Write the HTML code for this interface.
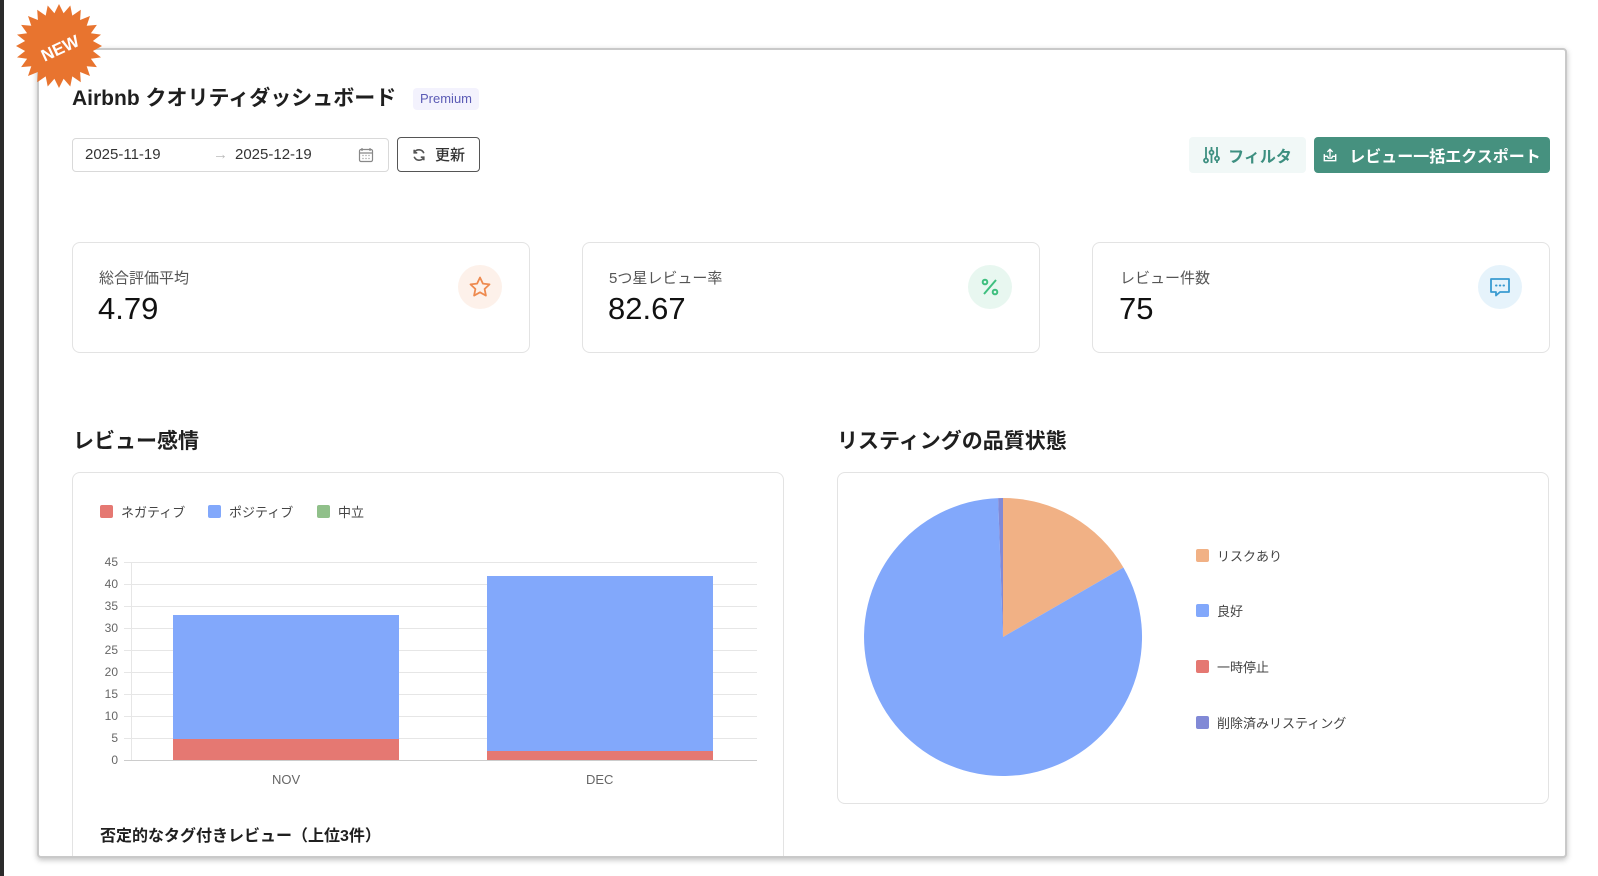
<!DOCTYPE html>
<html><head><meta charset="utf-8"><style>
*{box-sizing:border-box;margin:0;padding:0}
body{width:1598px;height:876px;overflow:hidden;background:#fff;font-family:"Liberation Sans","Noto Sans CJK JP",sans-serif;color:#1f1f1f;position:relative}
.a{position:absolute}
.strip{left:0;top:0;width:4px;height:876px;background:#2b2b2b}
.panel{left:37px;top:48px;width:1530px;height:810px;border:2px solid #c9c9c9;border-radius:4px;background:#fff;box-shadow:0 2px 6px rgba(0,0,0,.25)}
.card{border:1px solid #e3e3e3;border-radius:8px;background:#fff}
.lbl{font-size:15px;color:#555}
.num{font-size:31px;font-weight:500;color:#111}
.ic{width:44px;height:44px;border-radius:50%;display:flex;align-items:center;justify-content:center}
.yl{font-size:12px;color:#666;width:20px;text-align:right}
.grid{height:1px;background:#e6e6e6}
.leg{font-size:13px;color:#444;display:flex;align-items:center}
.sw{width:13px;height:13px;border-radius:2px;display:inline-block;margin-right:8px}
</style></head><body>
<div class="a strip"></div>
<div class="a panel"></div>

<svg class="a" style="left:14px;top:2px" width="90" height="90" viewBox="0 0 90 90">
<polygon fill="#e8742f" points="45,2 49.6,11.2 56.3,3.5 58.3,13.6 66.8,7.8 66.1,18 76,14 72.7,23.8 82.9,22.9 76.9,31.2 87,32.6 78.9,39 88,44 78.9,49 87,55.4 76.9,56.8 82.9,65.1 72.7,64.2 76,74 66.1,70 66.8,80.2 58.3,74.4 56.3,84.5 49.6,76.8 45,86 40.4,76.8 33.7,84.5 31.7,74.4 23.2,80.2 23.9,70 14,74 17.3,64.2 7.1,65.1 13.1,56.8 3,55.4 11.1,49 2,44 11.1,39 3,32.6 13.1,31.2 7.1,22.9 17.3,23.8 14,14 23.9,18 23.2,7.8 31.7,13.6 33.7,3.5 40.4,11.2"/>
<text x="46" y="52" fill="#fff" font-size="17" font-weight="bold" font-family="Liberation Sans" text-anchor="middle" transform="rotate(-25 46 46)">NEW</text>
</svg>

<div class="a" style="left:72px;top:82px;font-size:21px;font-weight:bold">Airbnb クオリティダッシュボード</div>
<div class="a" style="left:413px;top:88px;height:22px;padding:0 7px;background:#f3f2fd;border-radius:4px;color:#5b5bb5;font-size:13px;line-height:22px">Premium</div>

<div class="a" style="left:72px;top:138px;width:317px;height:34px;border:1px solid #d9d9d9;border-radius:4px;font-size:15px;color:#333">
<span class="a" style="left:12px;top:7px">2025-11-19</span>
<span class="a" style="left:140px;top:7px;color:#bbb">→</span>
<span class="a" style="left:162px;top:7px">2025-12-19</span>
<svg class="a" style="left:285px;top:8px" width="16" height="16" viewBox="0 0 16 16" fill="none" stroke="#888" stroke-width="1.2"><rect x="1.5" y="2.5" width="13" height="12" rx="1.5"/><path d="M4 1v3M12 1v3M1.5 6h13"/><path d="M4.5 8.5h1M7.5 8.5h1M10.5 8.5h1M4.5 11.5h1M7.5 11.5h1M10.5 11.5h1"/></svg>
</div>
<div class="a" style="left:397px;top:137px;width:83px;height:35px;border:1px solid #555;border-radius:4px;font-size:15px;font-weight:500;color:#333;display:flex;align-items:center;justify-content:center;gap:9px">
<svg width="14" height="14" viewBox="0 0 16 16" fill="none" stroke="#555" stroke-width="1.8"><path d="M13.5 6A6 6 0 0 0 2.7 5M2.5 10a6 6 0 0 0 10.8 1"/><path d="M2.5 2v3.5H6M13.5 14v-3.5H10"/></svg>更新</div>

<div class="a" style="left:1189px;top:137px;width:117px;height:36px;background:#f1f8f7;border-radius:4px;color:#3d8f80;font-size:16px;font-weight:bold;display:flex;align-items:center;justify-content:center;gap:8px">
<svg width="17" height="18" viewBox="0 0 17 18" fill="none" stroke="#3d8f80" stroke-width="1.8"><path d="M3 1v11M8.5 1v3M8.5 9v8M14 1v9M14 15v2"/><circle cx="3" cy="14.5" r="2"/><circle cx="8.5" cy="6.5" r="2"/><circle cx="14" cy="12.5" r="2"/></svg>フィルタ</div>
<div class="a" style="left:1314px;top:137px;width:236px;height:36px;background:#46917f;border-radius:4px;color:#fff;font-size:16px;font-weight:bold;display:flex;align-items:center;justify-content:center;gap:12px">
<svg width="14" height="14" viewBox="0 0 16 16" fill="none" stroke="#fff" stroke-width="1.6"><path d="M1.5 7v7.5h13V7M8 10V1.5M5 4.5 8 1.5l3 3M1.5 9.5H5l1 2h4l1-2h3.5"/></svg>レビュー一括エクスポート</div>

<div class="a card" style="left:72px;top:242px;width:458px;height:111px"></div>
<div class="a lbl" style="left:99px;top:267px">総合評価平均</div>
<div class="a num" style="left:98px;top:291px">4.79</div>
<div class="a ic" style="left:458px;top:265px;background:#fdf1ea"><svg width="24" height="24" viewBox="0 0 24 24" fill="none" stroke="#ee8a4f" stroke-width="1.8" stroke-linejoin="round"><path d="M12 2.5l2.9 6.1 6.6.8-4.9 4.6 1.3 6.6L12 17.3l-5.9 3.3 1.3-6.6-4.9-4.6 6.6-.8z"/></svg></div>

<div class="a card" style="left:582px;top:242px;width:458px;height:111px"></div>
<div class="a lbl" style="left:609px;top:267px">5つ星レビュー率</div>
<div class="a num" style="left:608px;top:291px">82.67</div>
<div class="a ic" style="left:968px;top:265px;background:#e8f7f0"><svg width="24" height="24" viewBox="0 0 24 24" fill="none" stroke="#3fbf7f" stroke-width="2"><path d="M18 5 6 19"/><circle cx="7" cy="7" r="2.3"/><circle cx="17" cy="17" r="2.3"/></svg></div>

<div class="a card" style="left:1092px;top:242px;width:458px;height:111px"></div>
<div class="a lbl" style="left:1120px;top:267px">レビュー件数</div>
<div class="a num" style="left:1119px;top:291px">75</div>
<div class="a ic" style="left:1478px;top:265px;background:#e6f3fb"><svg width="24" height="24" viewBox="0 0 24 24" fill="none" stroke="#3a9bd1" stroke-width="1.8" stroke-linejoin="round"><path d="M3 4h18v13h-9l-4 3.5V17H3z"/><path d="M8 10.5h.5M11.8 10.5h.5M15.5 10.5h.5" stroke-linecap="round" stroke-width="2"/></svg></div>

<div class="a" style="left:73px;top:425px;font-size:21px;font-weight:bold">レビュー感情</div>
<div class="a" style="left:837px;top:425px;font-size:21px;font-weight:bold">リスティングの品質状態</div>

<div class="a card" style="left:72px;top:472px;width:712px;height:384px;border-bottom:none;border-radius:8px 8px 0 0"></div>
<div class="a card" style="left:837px;top:472px;width:712px;height:332px"></div>

<div class="a leg" style="left:100px;top:502px"><span class="sw" style="background:#e57872"></span>ネガティブ</div>
<div class="a leg" style="left:208px;top:502px"><span class="sw" style="background:#82a8fb"></span>ポジティブ</div>
<div class="a leg" style="left:317px;top:502px"><span class="sw" style="background:#90c08a"></span>中立</div>

<div class="a" style="left:131px;top:562px;width:1px;height:198px;background:#e6e6e6"></div>
<div class="a yl" style="left:98px;top:555px">45</div><div class="a grid" style="left:124px;top:562px;width:633px"></div>
<div class="a yl" style="left:98px;top:577px">40</div><div class="a grid" style="left:124px;top:584px;width:633px"></div>
<div class="a yl" style="left:98px;top:599px">35</div><div class="a grid" style="left:124px;top:606px;width:633px"></div>
<div class="a yl" style="left:98px;top:621px">30</div><div class="a grid" style="left:124px;top:628px;width:633px"></div>
<div class="a yl" style="left:98px;top:643px">25</div><div class="a grid" style="left:124px;top:650px;width:633px"></div>
<div class="a yl" style="left:98px;top:665px">20</div><div class="a grid" style="left:124px;top:672px;width:633px"></div>
<div class="a yl" style="left:98px;top:687px">15</div><div class="a grid" style="left:124px;top:694px;width:633px"></div>
<div class="a yl" style="left:98px;top:709px">10</div><div class="a grid" style="left:124px;top:716px;width:633px"></div>
<div class="a yl" style="left:98px;top:731px">5</div><div class="a grid" style="left:124px;top:738px;width:633px"></div>
<div class="a yl" style="left:98px;top:753px">0</div>
<div class="a" style="left:173px;top:615px;width:226px;height:124px;background:#82a8fb"></div>
<div class="a" style="left:173px;top:739px;width:226px;height:21px;background:#e57872"></div>
<div class="a" style="left:487px;top:576px;width:226px;height:175px;background:#82a8fb"></div>
<div class="a" style="left:487px;top:751px;width:226px;height:9px;background:#e57872"></div>
<div class="a" style="left:124px;top:760px;width:633px;height:1px;background:#ccc"></div>
<div class="a" style="left:272px;top:772px;font-size:13px;color:#666">NOV</div>
<div class="a" style="left:586px;top:772px;font-size:13px;color:#666">DEC</div>

<div class="a" style="left:100px;top:822px;font-size:16px;font-weight:bold">否定的なタグ付きレビュー（上位3件）</div>

<svg class="a" style="left:0;top:0" width="1598" height="876">
<path d="M1003 637 L1003 498 A139 139 0 0 1 1123.4 567.5 Z" fill="#f1b185"/>
<path d="M1003 637 L1123.4 567.5 A139 139 0 1 1 998.1 498.1 Z" fill="#82a8fb"/>
<path d="M1003 637 L998.1 498.1 A139 139 0 0 1 1003 498 Z" fill="#8189d6"/>
</svg>
<div class="a leg" style="left:1196px;top:546px"><span class="sw" style="background:#f1b185"></span>リスクあり</div>
<div class="a leg" style="left:1196px;top:601px"><span class="sw" style="background:#82a8fb"></span>良好</div>
<div class="a leg" style="left:1196px;top:657px"><span class="sw" style="background:#e57872"></span>一時停止</div>
<div class="a leg" style="left:1196px;top:713px"><span class="sw" style="background:#8189d6"></span>削除済みリスティング</div>
</body></html>
